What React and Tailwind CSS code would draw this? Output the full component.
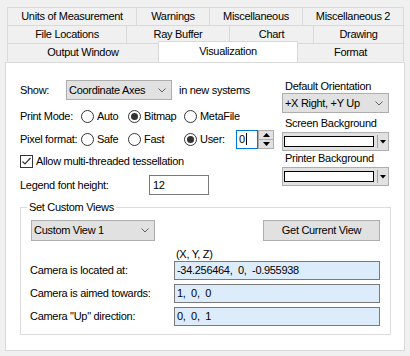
import React from "react";

const Chevron = () => (
  <svg width="8" height="5" viewBox="0 0 8 5">
    <path d="M0.5 0.5L4 4L7.5 0.5" stroke="#606060" fill="none" />
  </svg>
);

const Tab = ({ children, className = "" }) => (
  <div
    className={`flex h-[18px] items-center justify-center border-l border-t border-[#d9d9d9] bg-[#f0f0f0] ${className}`}
  >
    {children}
  </div>
);

const Combo = ({ children, className = "" }) => (
  <div
    className={`flex h-[20px] items-center justify-between border border-[#adadad] bg-[#e1e1e1] pl-[2px] pr-[5px] ${className}`}
  >
    <span>{children}</span>
    <Chevron />
  </div>
);

const Radio = ({ label, checked, className = "" }) => (
  <span className={`flex items-center ${className}`}>
    <span className="flex h-[13px] w-[13px] items-center justify-center rounded-full border border-[#333333] bg-white">
      {checked && <span className="h-[7px] w-[7px] rounded-full bg-[#333333]" />}
    </span>
    <span className="ml-[3px]">{label}</span>
  </span>
);

const ColorCombo = () => (
  <div className="flex h-[19px] items-center border border-[#adadad] bg-[#e1e1e1] pl-[1px]">
    <div className="h-[11px] w-[90px] border border-black bg-white" />
    <div className="ml-[3px] h-[13px] w-px bg-[#a0a0a0]" />
    <svg className="ml-[2px]" width="6" height="4" viewBox="0 0 6 4">
      <path d="M0 0H6L3 3.5Z" fill="#000" />
    </svg>
  </div>
);

const CameraRow = ({ label, value }) => (
  <div className="flex h-[19px] items-center">
    <span className="w-[147px] pl-[3px]">{label}</span>
    <div className="flex h-[19px] flex-1 items-center whitespace-pre border border-[#7a7a7a] bg-[#ddecfb] pl-[2px]">
      {value}
    </div>
  </div>
);

export default function App() {
  return (
    <div className="h-[356px] w-[410px] overflow-hidden bg-[#f0f0f0] pt-[7px] font-['Liberation_Sans',Arial,sans-serif] text-[11px] leading-[13px] tracking-[-0.3px] text-black">
      {/* tab strip */}
      <div className="ml-[7px] w-[397px]">
        <div className="flex">
          <Tab className="w-[129px]">Units of Measurement</Tab>
          <Tab className="w-[73px] border-[#c4dcf2] bg-[#d8eaf9]">Warnings</Tab>
          <Tab className="w-[93px]">Miscellaneous</Tab>
          <Tab className="w-[102px] border-r">Miscellaneous 2</Tab>
        </div>
        <div className="flex">
          <Tab className="w-[119px]">File Locations</Tab>
          <Tab className="w-[103px]">Ray Buffer</Tab>
          <Tab className="w-[84px]">Chart</Tab>
          <Tab className="w-[91px] border-r">Drawing</Tab>
        </div>
        <div className="flex">
          <Tab className="w-[151px]">Output Window</Tab>
          <div className="relative z-10 -mt-[2px] flex h-[21px] w-[140px] items-center justify-center border-l border-r border-t border-[#d9d9d9] bg-white pb-[1px]">
            Visualization
          </div>
          <Tab className="w-[106px] border-l-0 border-r">Format</Tab>
        </div>
      </div>

      {/* page */}
      <div className="ml-[5px] h-[289px] w-[400px] border border-[#d9d9d9] bg-white">
        <div className="flex pl-[14px] pt-[17px]">
          <div className="w-[262px]">
            <div className="flex h-[20px] items-center">
              <span className="w-[46px]">Show:</span>
              <Combo className="w-[106px]">Coordinate Axes</Combo>
              <span className="ml-[7px]">in new systems</span>
            </div>
            <div className="mt-[6px] flex h-[20px] items-center">
              <span className="w-[61px]">Print Mode:</span>
              <Radio label="Auto" className="w-[47px]" />
              <Radio label="Bitmap" checked className="w-[56px]" />
              <Radio label="MetaFile" />
            </div>
            <div className="mt-[3px] flex h-[20px] items-center">
              <span className="w-[61px]">Pixel format:</span>
              <Radio label="Safe" className="w-[47px]" />
              <Radio label="Fast" className="w-[56px]" />
              <Radio label="User:" checked className="w-[52px]" />
              <div className="flex h-[19px] w-[22px] items-center border border-[#0078d7] pl-[2px]">
                <span>0</span>
                <span className="ml-px h-[12px] w-px bg-black" />
              </div>
              <div className="flex h-[19px] w-[16px] flex-col border border-[#adadad] bg-[#e1e1e1]">
                <div className="flex flex-1 items-center justify-center border-b border-[#adadad]">
                  <svg width="7" height="4" viewBox="0 0 7 4">
                    <path d="M0 4H7L3.5 0Z" fill="#000" />
                  </svg>
                </div>
                <div className="flex flex-1 items-center justify-center">
                  <svg width="7" height="4" viewBox="0 0 7 4">
                    <path d="M0 0H7L3.5 4Z" fill="#000" />
                  </svg>
                </div>
              </div>
            </div>
            <div className="mt-[2px] flex h-[20px] items-center">
              <span className="flex h-[13px] w-[13px] items-center justify-center border border-[#333333] bg-white">
                <svg width="11" height="11" viewBox="0 0 11 11">
                  <path d="M1.5 5.5L4 8L9.5 2" stroke="#333333" strokeWidth="1.2" fill="none" />
                </svg>
              </span>
              <span className="ml-[3px]">Allow multi-threaded tessellation</span>
            </div>
            <div className="mt-[4px] flex h-[20px] items-center">
              <span className="w-[129px]">Legend font height:</span>
              <div className="flex h-[20px] w-[60px] items-center border border-[#7a7a7a] pl-[3px]">12</div>
            </div>
          </div>

          <div className="w-[107px]">
            <div className="h-[13px] pl-[3px]">Default Orientation</div>
            <Combo className="w-[107px]">+X Right, +Y Up</Combo>
            <div className="mt-[4px] h-[13px] pl-[3px]">Screen Background</div>
            <div className="mt-[2px]">
              <ColorCombo />
            </div>
            <div className="mt-[1px] h-[13px] pl-[3px]">Printer Background</div>
            <div className="mt-[2px]">
              <ColorCombo />
            </div>
          </div>
        </div>

        <fieldset className="ml-[14px] mt-[6px] w-[371px] border border-[#dcdcdc] pb-[8px] pl-[6px] pr-[10px]">
          <legend className="px-[2px]">Set Custom Views</legend>
          <div className="mt-[6px] flex h-[21px] items-center justify-between pl-[4px]">
            <Combo className="h-[21px] w-[124px]">Custom View 1</Combo>
            <div className="flex h-[21px] w-[117px] items-center justify-center border border-[#adadad] bg-[#e1e1e1]">
              Get Current View
            </div>
          </div>
          <div className="ml-[149px] mt-[7px] h-[13px]">(X, Y, Z)</div>
          <div className="flex flex-col gap-[4px]">
            <CameraRow label="Camera is located at:" value="-34.256464,  0,  -0.955938" />
            <CameraRow label="Camera is aimed towards:" value="1,  0,  0" />
            <CameraRow label='Camera "Up" direction:' value="0,  0,  1" />
          </div>
        </fieldset>
      </div>
    </div>
  );
}
